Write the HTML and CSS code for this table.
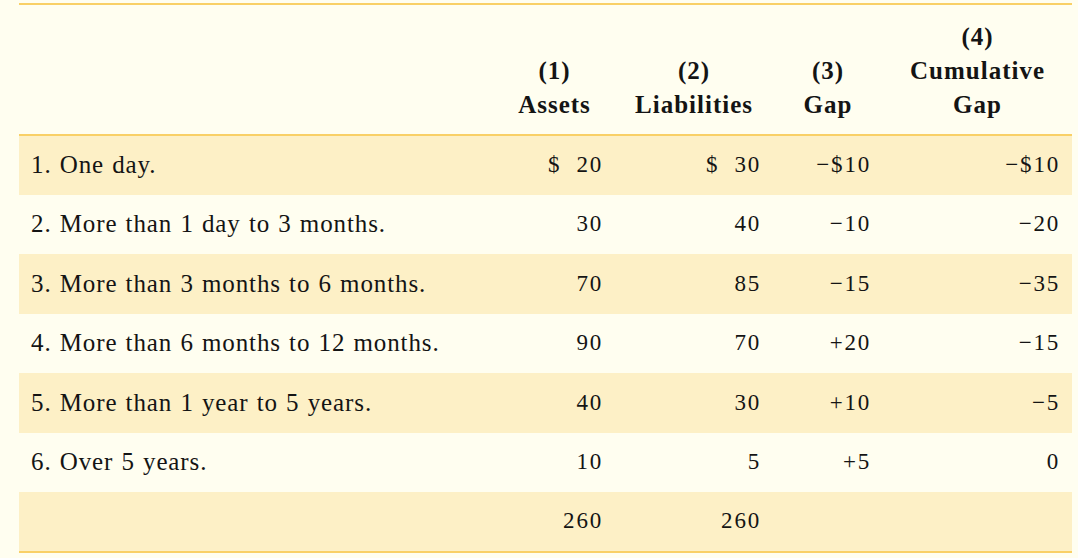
FILE: index.html
```html
<!DOCTYPE html>
<html>
<head>
<meta charset="utf-8">
<link rel="stylesheet" href="styles.css">
</head>
<body>
<div class="wrap">
<table class="gap-table">
  <colgroup>
    <col class="c-label">
    <col class="c-assets">
    <col class="c-liab">
    <col class="c-gap">
    <col class="c-cum">
  </colgroup>
  <thead>
    <tr>
      <th></th>
      <th>(1)<br>Assets</th>
      <th>(2)<br>Liabilities</th>
      <th>(3)<br>Gap</th>
      <th>(4)<br>Cumulative<br>Gap</th>
    </tr>
  </thead>
  <tbody>
    <tr class="shade"><td class="label">1. One day.</td><td class="num">$&nbsp; 20</td><td class="num">$&nbsp; 30</td><td class="num">−$10</td><td class="num">−$10</td></tr>
    <tr><td class="label">2. More than 1 day to 3 months.</td><td class="num">30</td><td class="num">40</td><td class="num">−10</td><td class="num">−20</td></tr>
    <tr class="shade"><td class="label">3. More than 3 months to 6 months.</td><td class="num">70</td><td class="num">85</td><td class="num">−15</td><td class="num">−35</td></tr>
    <tr><td class="label">4. More than 6 months to 12 months.</td><td class="num">90</td><td class="num">70</td><td class="num">+20</td><td class="num">−15</td></tr>
    <tr class="shade"><td class="label">5. More than 1 year to 5 years.</td><td class="num">40</td><td class="num">30</td><td class="num">+10</td><td class="num">−5</td></tr>
    <tr><td class="label">6. Over 5 years.</td><td class="num">10</td><td class="num">5</td><td class="num">+5</td><td class="num">0</td></tr>
    <tr class="shade total"><td class="label"></td><td class="num">260</td><td class="num">260</td><td class="num"></td><td class="num"></td></tr>
  </tbody>
</table>
</div>
</body>
</html>
```

FILE: styles.css
```css
html, body {
  margin: 0;
  padding: 0;
  background: #fffef0;
}
body {
  font-family: "Liberation Serif", "DejaVu Serif", serif;
  color: #141414;
}
.wrap {
  padding: 3px 6px 0 19px;
}
.gap-table {
  width: 1053px;
  border-collapse: collapse;
  table-layout: fixed;
  border-top: 2px solid #f9d066;
  border-bottom: 2px solid #f9d066;
}
.c-label { width: 475px; }
.c-assets { width: 121px; }
.c-liab { width: 158px; }
.c-gap { width: 110px; }
.c-cum { width: 189px; }

.gap-table th {
  font-weight: bold;
  font-size: 25px;
  line-height: 34px;
  letter-spacing: 1px;
  text-align: center;
  vertical-align: bottom;
  padding: 0 2px 12px;
  height: 131px;
  box-sizing: border-box;
  border-bottom: 2px solid #f9d066;
}
.gap-table td {
  padding: 0 14px 0 12px;
  font-size: 25px;
  vertical-align: middle;
}
.gap-table tbody tr {
  height: 59.5px;
}
.gap-table td.label {
  letter-spacing: 0.9px;
  word-spacing: 1px;
}
.gap-table td.num {
  text-align: right;
  font-size: 23px;
  letter-spacing: 1.8px;
  padding-right: 12px;
}
.shade td {
  background: #fdf0c6;
}
```
